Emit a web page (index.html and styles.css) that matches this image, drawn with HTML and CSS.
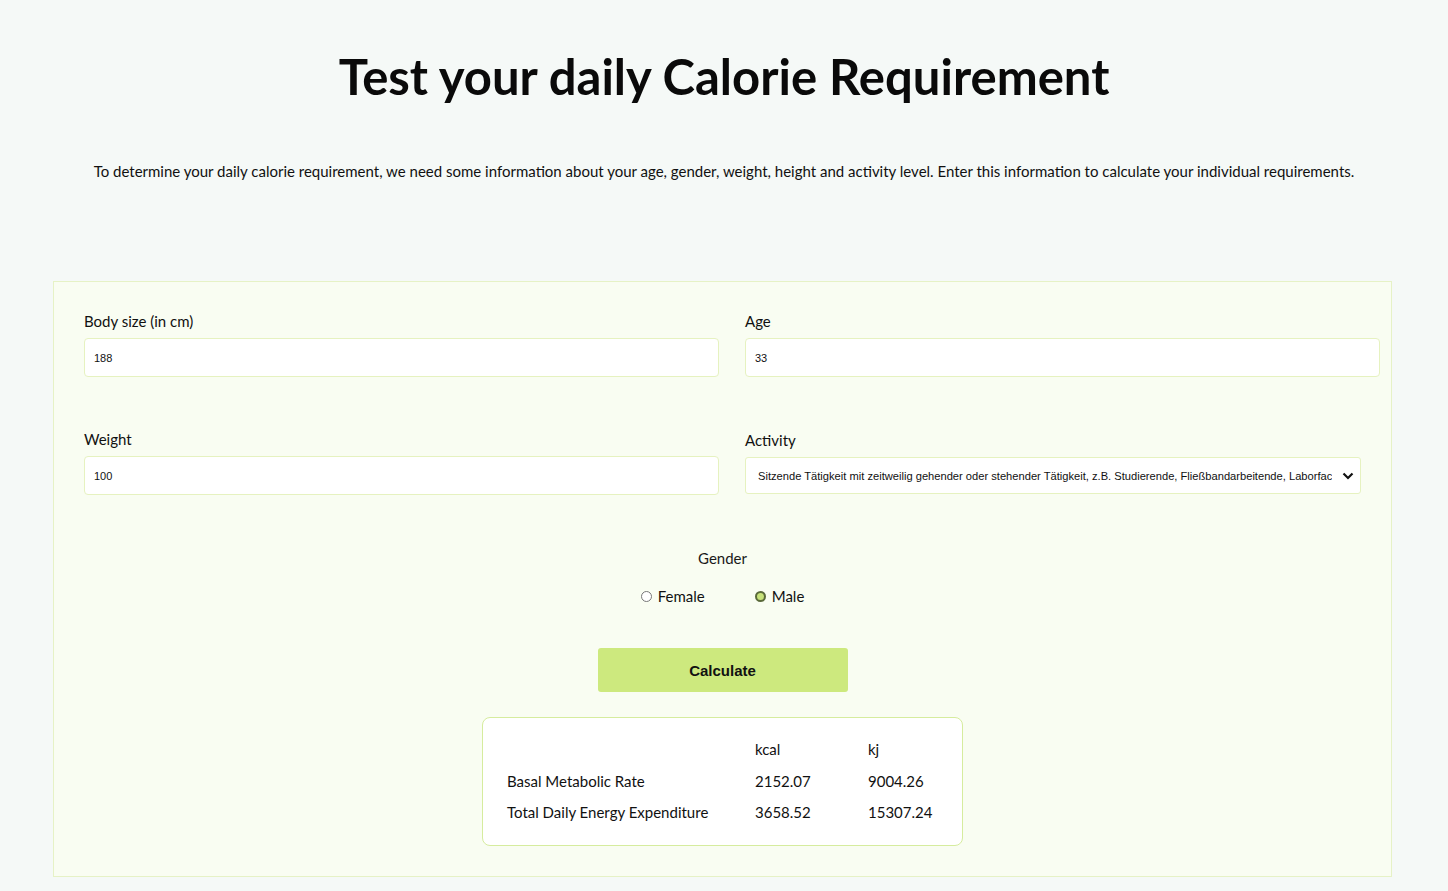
FILE: index.html
```html
<!DOCTYPE html>
<html lang="en">
<head>
<meta charset="utf-8">
<title>Calorie Requirement</title>
<link rel="stylesheet" href="styles.css">
</head>
<body>
<main class="page">
  <h1 class="title">Test your daily Calorie Requirement</h1>
  <p class="intro">To determine your daily calorie requirement, we need some information about your age, gender, weight, height and activity level. Enter this information to calculate your individual requirements.</p>

  <form class="calc">
    <div class="grid">
      <div class="field">
        <label class="label">Body size (in cm)</label>
        <input class="input" type="text" value="188">
      </div>
      <div class="field">
        <label class="label">Age</label>
        <input class="input" type="text" value="33">
      </div>
      <div class="field">
        <label class="label">Weight</label>
        <input class="input" type="text" value="100">
      </div>
      <div class="field">
        <label class="label label-act">Activity</label>
        <div class="select">
          <span class="select-text">Sitzende Tätigkeit mit zeitweilig gehender oder stehender Tätigkeit, z.B. Studierende, Fließbandarbeitende, Laborfac</span>
          <svg class="chev" width="12" height="8" viewBox="0 0 12 8"><path d="M1.5 1.5 L6 6 L10.5 1.5" fill="none" stroke="#111" stroke-width="2.2"/></svg>
        </div>
      </div>
    </div>

    <div class="gender">
      <div class="gender-label">Gender</div>
      <div class="radios">
        <label class="radio"><span class="dot"></span>Female</label>
        <label class="radio"><span class="dot on"></span>Male</label>
      </div>
    </div>

    <div class="actions">
      <button type="button" class="btn">Calculate</button>
    </div>

    <div class="results">
      <table class="table">
        <tr><th></th><th>kcal</th><th>kj</th></tr>
        <tr><td>Basal Metabolic Rate</td><td>2152.07</td><td>9004.26</td></tr>
        <tr><td>Total Daily Energy Expenditure</td><td>3658.52</td><td>15307.24</td></tr>
      </table>
    </div>
  </form>
</main>
</body>
</html>
```

FILE: styles.css
```css
* { box-sizing: border-box; }
html, body { margin: 0; padding: 0; }
body {
  background: #f5f9f7;
  font-family: "Lato", "Noto Sans", sans-serif;
  color: #111;
}
.page {
  width: 1448px;
  padding: 48px 0 20px;
}
.title {
  margin: 0;
  text-align: center;
  font-size: 49px;
  font-weight: 700;
  line-height: 56px;
  color: #0a0a0a;
}
.intro {
  margin: 57px 0 0;
  text-align: center;
  font-size: 15px;
  line-height: 20px;
  color: #111;
}
.calc {
  margin: 100px 0 0 53px;
  width: 1339px;
  height: 596px;
  background: #f9fdf2;
  border: 1px solid #e6f2c6;
  padding: 29px 0 0 0;
}
.grid {
  display: grid;
  grid-template-columns: 635px 635px;
  column-gap: 26px;
  row-gap: 52px;
  margin: 0 11px 0 30px;
}
.field { display: flex; flex-direction: column; }
.label {
  font-size: 15px;
  line-height: 20px;
  margin-bottom: 7px;
  color: #111;
}
.label-act { margin-top: 1px; margin-bottom: 6px; }
.input {
  height: 39px;
  border: 1px solid #e6f2c0;
  border-radius: 4px;
  background: #fff;
  padding: 0 9px;
  font-family: "Liberation Sans", Arial, sans-serif;
  font-size: 11px;
  color: #111;
  outline: none;
}
.select {
  width: 616px;
  height: 37px;
  border: 1px solid #e6f2c0;
  border-radius: 3px;
  background: #fff;
  display: flex;
  align-items: center;
  padding: 0 6px 0 12px;
  margin-top: 1px;
}
.select-text {
  flex: 1;
  white-space: nowrap;
  overflow: hidden;
  font-family: "Liberation Sans", Arial, sans-serif;
  font-size: 11.15px;
  color: #111;
  margin-right: 10px;
}
.chev { flex: none; }
.gender {
  margin-top: 53px;
  display: flex;
  flex-direction: column;
  align-items: center;
}
.gender-label {
  font-size: 15px;
  line-height: 20px;
  color: #1a1a1a;
}
.radios {
  display: flex;
  gap: 50px;
  margin-top: 18px;
}
.radio {
  display: flex;
  align-items: center;
  font-size: 15px;
  line-height: 20px;
}
.dot {
  width: 11px;
  height: 11px;
  border-radius: 50%;
  border: 1px solid #777;
  background: #fff;
  margin-right: 6px;
}
.dot.on {
  border: 2px solid #5a6a3a;
  background: #c7e27a;
}
.actions {
  display: flex;
  justify-content: center;
  margin-top: 42px;
}
.btn {
  width: 250px;
  height: 44px;
  background: #cde97e;
  border: none;
  border-radius: 3px;
  font-family: "Liberation Sans", Arial, sans-serif;
  font-weight: 700;
  font-size: 15px;
  color: #111;
}
.results {
  margin: 25px auto 0;
  width: 481px;
  height: 129px;
  background: #fff;
  border: 1px solid #d6ec9e;
  border-radius: 8px;
  padding: 15px 24px 0;
}
.table {
  border-collapse: collapse;
  font-size: 15px;
}
.table th, .table td {
  text-align: left;
  font-weight: 400;
  padding: 0;
  height: 31px;
  line-height: 20px;
}
.table th { height: 32px; }
.table td:first-child, .table th:first-child { width: 248px; }
.table td:nth-child(2), .table th:nth-child(2) { width: 113px; }
```
